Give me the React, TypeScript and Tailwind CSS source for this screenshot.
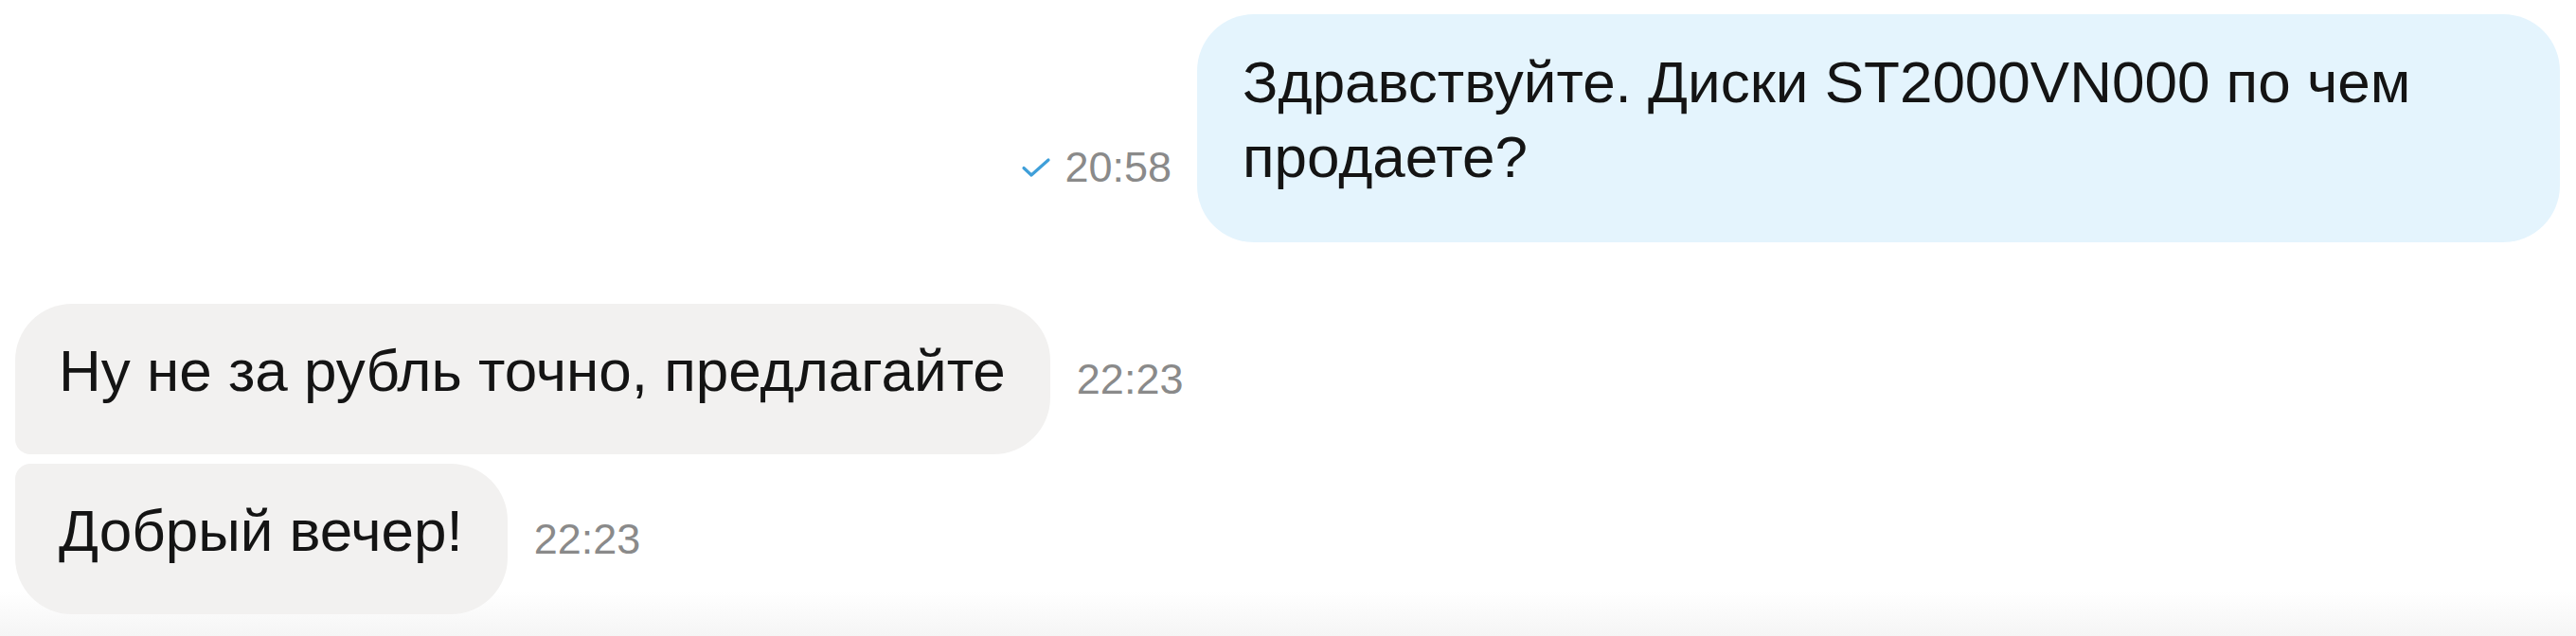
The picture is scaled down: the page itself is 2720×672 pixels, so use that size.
import React from "react";

type Msg = {
  id: number;
  text: string;
  time: string;
  shape: string;
};

const incoming: Msg[] = [
  {
    id: 1,
    text: "Ну не за рубль точно, предлагайте",
    time: "22:23",
    shape: "rounded-[60px] rounded-bl-[16px]",
  },
  {
    id: 2,
    text: "Добрый вечер!",
    time: "22:23",
    shape: "rounded-[60px] rounded-tl-[16px]",
  },
];

const Check = () => (
  <svg width="32" height="24" viewBox="0 0 32 24" fill="none">
    <path
      d="M3 12.5 L11 20 L29 4"
      stroke="#3f9fd9"
      strokeWidth="3.2"
      strokeLinecap="round"
      strokeLinejoin="round"
    />
  </svg>
);

const Time = ({ value, read }: { value: string; read?: boolean }) => (
  <div className="mb-[53px] flex shrink-0 items-center gap-[14px] text-[45px] leading-[52px] text-[#8a8a8a]">
    {read ? <Check /> : null}
    <span>{value}</span>
  </div>
);

export default function App() {
  return (
    <div className="h-[672px] w-full overflow-hidden bg-linear-to-b from-white from-[93%] to-[#f5f5f5] pt-[15px] pl-4 pr-[17px] font-['Liberation_Sans',Arial,sans-serif] text-[#141414]">
      <div className="flex items-end justify-end gap-[27px]">
        <Time value="20:58" read />
        <div className="max-w-[1439px] rounded-[60px] bg-[#e4f4fd] pt-[32px] pr-[46px] pb-[51px] pl-[48px] text-[62px] leading-[79px]">
          Здравствуйте. Диски ST2000VN000 по чем продаете?
        </div>
      </div>

      <div className="mt-[65px] flex flex-col gap-[10px]">
        {incoming.map((m) => (
          <div key={m.id} className="flex items-end gap-[28px]">
            <div
              className={`${m.shape} bg-[#f2f1f0] pt-[31px] pr-[47px] pb-[49px] pl-[46px] text-[62px] leading-[79px]`}
            >
              {m.text}
            </div>
            <Time value={m.time} />
          </div>
        ))}
      </div>
    </div>
  );
}
